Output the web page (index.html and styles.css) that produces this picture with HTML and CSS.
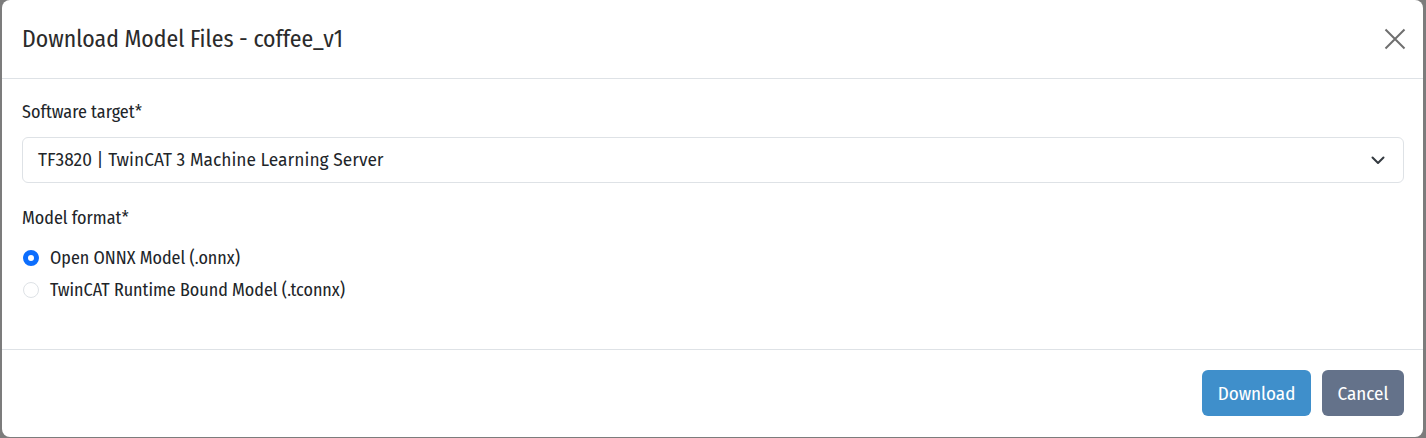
FILE: index.html
```html
<!DOCTYPE html>
<html lang="en">
<head>
<meta charset="utf-8">
<title>Download Model Files</title>
<link rel="stylesheet" href="styles.css">
</head>
<body>
<div class="backdrop">
  <div class="modal">
    <div class="modal-header">
      <h5 class="modal-title">Download Model Files - coffee_v1</h5>
      <button class="btn-close" aria-label="Close">
        <svg width="22" height="22" viewBox="0 0 22 22"><path d="M1.5 1.5 L20.5 20.5 M20.5 1.5 L1.5 20.5" stroke="#6f6f6f" stroke-width="2" fill="none"/></svg>
      </button>
    </div>
    <div class="modal-body">
      <div class="field">
        <label class="form-label">Software target*</label>
        <div class="select">
          <span>TF3820 | TwinCAT 3 Machine Learning Server</span>
          <svg class="chevron" width="14" height="9" viewBox="0 0 14 9"><path d="M1.5 1.5 L7 7 L12.5 1.5" stroke="#343a40" stroke-width="2" fill="none" stroke-linecap="round" stroke-linejoin="round"/></svg>
        </div>
      </div>
      <div class="field">
        <label class="form-label">Model format*</label>
        <div class="radios">
          <div class="radio-row"><span class="radio checked"></span><span>Open ONNX Model (.onnx)</span></div>
          <div class="radio-row"><span class="radio"></span><span>TwinCAT Runtime Bound Model (.tconnx)</span></div>
        </div>
      </div>
    </div>
    <div class="modal-footer">
      <button class="btn btn-primary">Download</button>
      <button class="btn btn-secondary">Cancel</button>
    </div>
  </div>
</div>
</body>
</html>
```
FILE: styles.css
```css
html, body {
  margin: 0;
  padding: 0;
  background: #7c7c7c;
}
body {
  font-family: "Fira Sans Condensed", "Roboto Condensed", sans-serif;
  color: #212529;
  font-size: 18px;
}
.backdrop {
  padding: 0 3px 1px 2px;
}
.modal {
  background: #fff;
  border-radius: 8px;
  display: flex;
  flex-direction: column;
}
.modal-header {
  height: 79px;
  box-sizing: border-box;
  border-bottom: 1px solid #dee2e6;
  display: flex;
  align-items: center;
  justify-content: space-between;
  padding: 0 17px 0 20px;
}
.modal-title {
  margin: 0;
  font-size: 23.7px;
  font-weight: 400;
  color: #2b2b2b;
  line-height: 30px;
}
.btn-close {
  border: 0;
  background: none;
  padding: 0;
  width: 22px;
  height: 22px;
  display: flex;
}
.modal-body {
  padding: 20px 19px 46px 20px;
  display: flex;
  flex-direction: column;
  gap: 22px;
}
.field {
  display: flex;
  flex-direction: column;
}
.form-label {
  line-height: 26px;
  margin-bottom: 12px;
}
.select {
  height: 46px;
  box-sizing: border-box;
  border: 1px solid #dee2e6;
  border-radius: 6px;
  display: flex;
  align-items: center;
  justify-content: space-between;
  padding: 0 18px 0 15px;
  font-family: "Fira Sans", sans-serif;
  font-size: 17.4px;
}
.chevron {
  display: block;
}
.radios {
  display: flex;
  flex-direction: column;
  gap: 6px;
  margin-top: 2px;
}
.radio-row {
  display: flex;
  align-items: center;
  gap: 11px;
  line-height: 26px;
  padding-left: 1px;
}
.radio {
  width: 16px;
  height: 16px;
  box-sizing: border-box;
  border-radius: 50%;
  border: 1px solid #dee2e6;
  background: #fff;
  flex: none;
}
.radio.checked {
  border: 5px solid #0d6efd;
  background: #fff;
}
.modal-footer {
  border-top: 1px solid #dee2e6;
  display: flex;
  justify-content: flex-end;
  gap: 11px;
  padding: 20px 19px 21px 20px;
}
.btn {
  font-family: inherit;
  font-size: 19px;
  color: #fff;
  border: 0;
  border-radius: 6px;
  height: 46px;
  padding: 0;
}
.btn-primary {
  background: #3f8fcb;
  width: 109px;
}
.btn-secondary {
  background: #64728a;
  width: 82px;
}
```
